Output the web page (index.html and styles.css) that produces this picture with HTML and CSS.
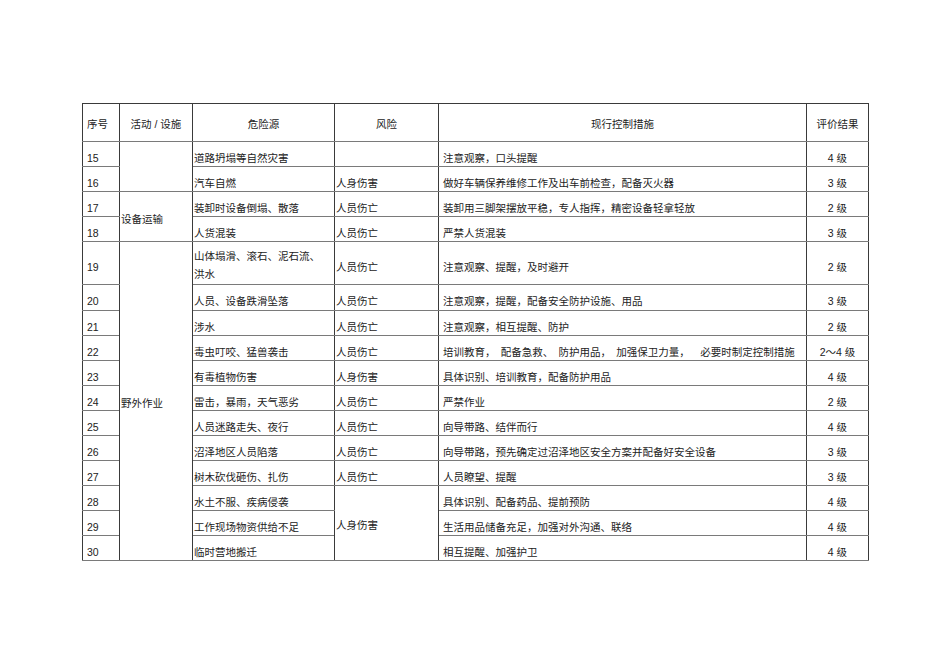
FILE: index.html
```html
<!DOCTYPE html>
<html lang="zh">
<head>
<meta charset="utf-8">
<title>危险源评价表</title>
<link rel="stylesheet" href="styles.css">
</head>
<body>
<div class="page">
<table class="risk">
  <colgroup>
    <col class="c-no"><col class="c-act"><col class="c-src"><col class="c-risk"><col class="c-ctrl"><col class="c-res">
  </colgroup>
  <thead>
    <tr class="hd">
      <th class="no">序号</th>
      <th>活动 / 设施</th>
      <th>危险源</th>
      <th>风险</th>
      <th>现行控制措施</th>
      <th>评价结果</th>
    </tr>
  </thead>
  <tbody>
    <tr><td class="no">15</td><td class="act" rowspan="2"></td><td class="src">道路坍塌等自然灾害</td><td class="rk"></td><td class="ctrl">注意观察，口头提醒</td><td class="res">4 级</td></tr>
    <tr><td class="no">16</td><td class="src">汽车自燃</td><td class="rk">人身伤害</td><td class="ctrl">做好车辆保养维修工作及出车前检查，配备灭火器</td><td class="res">3 级</td></tr>
    <tr><td class="no">17</td><td class="act merged" rowspan="2">设备运输</td><td class="src">装卸时设备倒塌、散落</td><td class="rk">人员伤亡</td><td class="ctrl">装卸用三脚架摆放平稳，专人指挥，精密设备轻拿轻放</td><td class="res">2 级</td></tr>
    <tr><td class="no">18</td><td class="src">人货混装</td><td class="rk">人员伤亡</td><td class="ctrl">严禁人货混装</td><td class="res">3 级</td></tr>
    <tr class="tall"><td class="no">19</td><td class="act merged" rowspan="12">野外作业</td><td class="src multi">山体塌滑、滚石、泥石流、<br>洪水</td><td class="rk">人员伤亡</td><td class="ctrl">注意观察、提醒，及时避开</td><td class="res">2 级</td></tr>
    <tr class="r26"><td class="no">20</td><td class="src">人员、设备跌滑坠落</td><td class="rk">人员伤亡</td><td class="ctrl">注意观察，提醒，配备安全防护设施、用品</td><td class="res">3 级</td></tr>
    <tr><td class="no">21</td><td class="src">涉水</td><td class="rk">人员伤亡</td><td class="ctrl">注意观察，相互提醒、防护</td><td class="res">2 级</td></tr>
    <tr><td class="no">22</td><td class="src">毒虫叮咬、猛兽袭击</td><td class="rk">人员伤亡</td><td class="ctrl">培训教育，&ensp;配备急救、&ensp;防护用品，&ensp;加强保卫力量，&ensp;&ensp;必要时制定控制措施</td><td class="res">2～4 级</td></tr>
    <tr><td class="no">23</td><td class="src">有毒植物伤害</td><td class="rk">人身伤害</td><td class="ctrl">具体识别、培训教育，配备防护用品</td><td class="res">4 级</td></tr>
    <tr><td class="no">24</td><td class="src">雷击，暴雨，天气恶劣</td><td class="rk">人员伤亡</td><td class="ctrl">严禁作业</td><td class="res">2 级</td></tr>
    <tr><td class="no">25</td><td class="src">人员迷路走失、夜行</td><td class="rk">人员伤亡</td><td class="ctrl">向导带路、结伴而行</td><td class="res">4 级</td></tr>
    <tr><td class="no">26</td><td class="src">沼泽地区人员陷落</td><td class="rk">人员伤亡</td><td class="ctrl">向导带路，预先确定过沼泽地区安全方案并配备好安全设备</td><td class="res">3 级</td></tr>
    <tr><td class="no">27</td><td class="src">树木砍伐砸伤、扎伤</td><td class="rk">人员伤亡</td><td class="ctrl">人员瞭望、提醒</td><td class="res">3 级</td></tr>
    <tr><td class="no">28</td><td class="src">水土不服、疾病侵袭</td><td class="rk merged" rowspan="3">人身伤害</td><td class="ctrl">具体识别、配备药品、提前预防</td><td class="res">4 级</td></tr>
    <tr><td class="no">29</td><td class="src">工作现场物资供给不足</td><td class="ctrl">生活用品储备充足，加强对外沟通、联络</td><td class="res">4 级</td></tr>
    <tr><td class="no">30</td><td class="src">临时营地搬迁</td><td class="ctrl">相互提醒、加强护卫</td><td class="res">4 级</td></tr>
  </tbody>
</table>
</div>
</body>
</html>
```

FILE: styles.css
```css
html, body {
  margin: 0;
  padding: 0;
  background: #ffffff;
}

.page {
  padding: 103px 0 0 82px;
}

.risk {
  border-collapse: collapse;
  table-layout: fixed;
  width: 787px;
  font-family: "Liberation Sans", "Noto Sans CJK SC", sans-serif;
  font-size: 10.5px;
  line-height: 14px;
  color: #222222;
}

.c-no { width: 37px; }
.c-act { width: 73px; }
.c-src { width: 142px; }
.c-risk { width: 104px; }
.c-ctrl { width: 368px; }
.c-res { width: 62px; }

.risk th,
.risk td {
  border-left: 1px solid #3a3a3a;
  border-right: 1px solid #3a3a3a;
  border-top: 1px solid #7a7a7a;
  border-bottom: 1px solid #7a7a7a;
  padding: 7px 1px 0 1px;
  vertical-align: middle;
  white-space: nowrap;
  overflow: hidden;
}

.risk thead th {
  border-top: 1px solid #3a3a3a;
  font-weight: normal;
  text-align: center;
  padding: 2px 1px 0 1px;
}

.risk thead th.no {
  text-align: left;
  padding-left: 4px;
}

.hd { height: 38px; }
.risk tbody tr { height: 25px; }
.risk tbody tr.tall { height: 43px; }
.risk tbody tr.r26 { height: 26px; }

.risk td.no {
  padding-left: 4px;
}

.risk td.ctrl {
  padding-left: 4px;
}

.risk td.res {
  text-align: center;
}

.risk td.merged {
  padding-top: 4px;
}

.risk td.multi {
  line-height: 18px;
  padding-top: 3px;
}
```
